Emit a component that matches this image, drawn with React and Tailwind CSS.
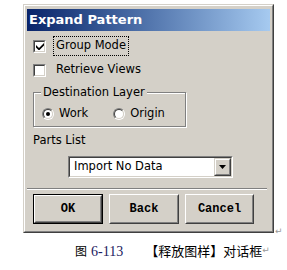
export default function App() {
  return (
    <div className="w-[287px] h-[270px] bg-white font-['DejaVu_Sans',sans-serif] text-black">
      <div className="flex items-end pl-[23px] pt-[4px]">
        {/* dialog window */}
        <div className="w-[251px] h-[229px] bg-[#d4d0c8] border border-t-[#d4d0c8] border-l-[#d4d0c8] border-r-[#404040] border-b-[#404040]">
          <div className="h-full border border-t-white border-l-white border-r-[#808080] border-b-[#808080] px-[2px] pt-[3px] flex flex-col">
            <div className="h-[22px] flex items-center pl-[2px] bg-gradient-to-r from-[#0a246a] to-[#a6caf0] text-white font-bold text-[13px]">
              Expand Pattern
            </div>

            <div className="mt-[5px] h-[20px] flex items-center pl-[6px] text-[11.5px]">
              <Checkbox checked />
              <span className="ml-[8px] px-[2px] outline outline-1 outline-dotted outline-black">Group Mode</span>
            </div>
            <div className="mt-[4px] h-[20px] flex items-center pl-[6px] text-[11.5px]">
              <Checkbox />
              <span className="ml-[10px]">Retrieve Views</span>
            </div>

            <div className="relative mt-[12px] ml-[6px] w-[153px] h-[35px] border border-[#808080] shadow-[inset_1px_1px_0_white,1px_1px_0_white] flex items-center pt-[8px] text-[11.5px]">
              <span className="absolute -top-[9px] left-[7px] px-[2px] bg-[#d4d0c8]">Destination Layer</span>
              <div className="ml-[8px] flex items-center">
                <Radio checked />
                <span className="ml-[5px]">Work</span>
              </div>
              <div className="ml-[25px] flex items-center">
                <Radio />
                <span className="ml-[5px]">Origin</span>
              </div>
            </div>

            <div className="mt-[4px] h-[20px] flex items-center pl-[6px] text-[11.5px]">Parts List</div>

            <div className="mt-[5px] ml-[41px] w-[165px] h-[22px] border border-t-[#808080] border-l-[#808080] border-r-white border-b-white">
              <div className="h-full border border-t-[#404040] border-l-[#404040] border-r-[#d4d0c8] border-b-[#d4d0c8] bg-white flex items-center text-[11.5px]">
                <span className="flex-1 pl-[4px]">Import No Data</span>
                <div className="w-[17px] h-full bg-[#d4d0c8] border border-t-[#d4d0c8] border-l-[#d4d0c8] border-r-[#404040] border-b-[#404040]">
                  <div className="h-full border border-t-white border-l-white border-r-[#808080] border-b-[#808080] flex items-center justify-center">
                    <svg width="7" height="4" viewBox="0 0 7 4"><path d="M0 0h7L3.5 4z" fill="black" /></svg>
                  </div>
                </div>
              </div>
            </div>

            <div className="mt-[10px] mr-[3px] h-[2px] border-t border-t-[#808080] border-b border-b-white" />

            <div className="mt-[4px] ml-[6px] flex gap-[6px] font-['Liberation_Mono',monospace] font-bold text-[12px]">
              <div className="w-[70px] h-[30px] border border-black">
                <Btn>OK</Btn>
              </div>
              <div className="w-[70px] h-[30px]"><Btn>Back</Btn></div>
              <div className="w-[69px] h-[30px]"><Btn>Cancel</Btn></div>
            </div>
          </div>
        </div>
        <span className="ml-[1px] mb-[-3px] text-[9px] leading-none text-[#999]">↵</span>
      </div>

      <div className="mt-[10px] pl-[75px] flex items-center h-[16px] text-[13px]">
        <span className="font-['Noto_Sans_CJK_SC',sans-serif] text-[12px]">图</span>
        <span className="ml-[4px] font-['Liberation_Serif',serif] text-[14px] text-[#1a2060]">6-113</span>
        <span className="ml-[22px] font-['Noto_Sans_CJK_SC',sans-serif] text-[13px]">【释放图样】对话框</span>
        <span className="text-[9px] text-[#999]">↵</span>
      </div>
    </div>
  )
}

function Checkbox({ checked }) {
  return (
    <div className="w-[13px] h-[13px] border border-t-[#808080] border-l-[#808080] border-r-white border-b-white">
      <div className="w-full h-full bg-white border border-t-[#404040] border-l-[#404040] border-r-[#d4d0c8] border-b-[#d4d0c8] flex items-center justify-center">
        {checked && (
          <svg width="8" height="8" viewBox="0 0 8 8">
            <path d="M0 3l3 3 5-5v2.5l-5 5-3-3z" fill="black" />
          </svg>
        )}
      </div>
    </div>
  )
}

function Radio({ checked }) {
  return (
    <div className="w-[12px] h-[12px] rounded-full border border-t-[#808080] border-l-[#808080] border-r-white border-b-white">
      <div className="w-full h-full rounded-full bg-white border border-t-[#404040] border-l-[#404040] border-r-[#d4d0c8] border-b-[#d4d0c8] flex items-center justify-center">
        {checked && <div className="w-[4px] h-[4px] rounded-full bg-black" />}
      </div>
    </div>
  )
}

function Btn({ children }) {
  return (
    <div className="w-full h-full bg-[#d4d0c8] border border-t-white border-l-white border-r-[#404040] border-b-[#404040]">
      <div className="w-full h-full border border-t-[#d4d0c8] border-l-[#d4d0c8] border-r-[#808080] border-b-[#808080] flex items-center justify-center">
        {children}
      </div>
    </div>
  )
}
